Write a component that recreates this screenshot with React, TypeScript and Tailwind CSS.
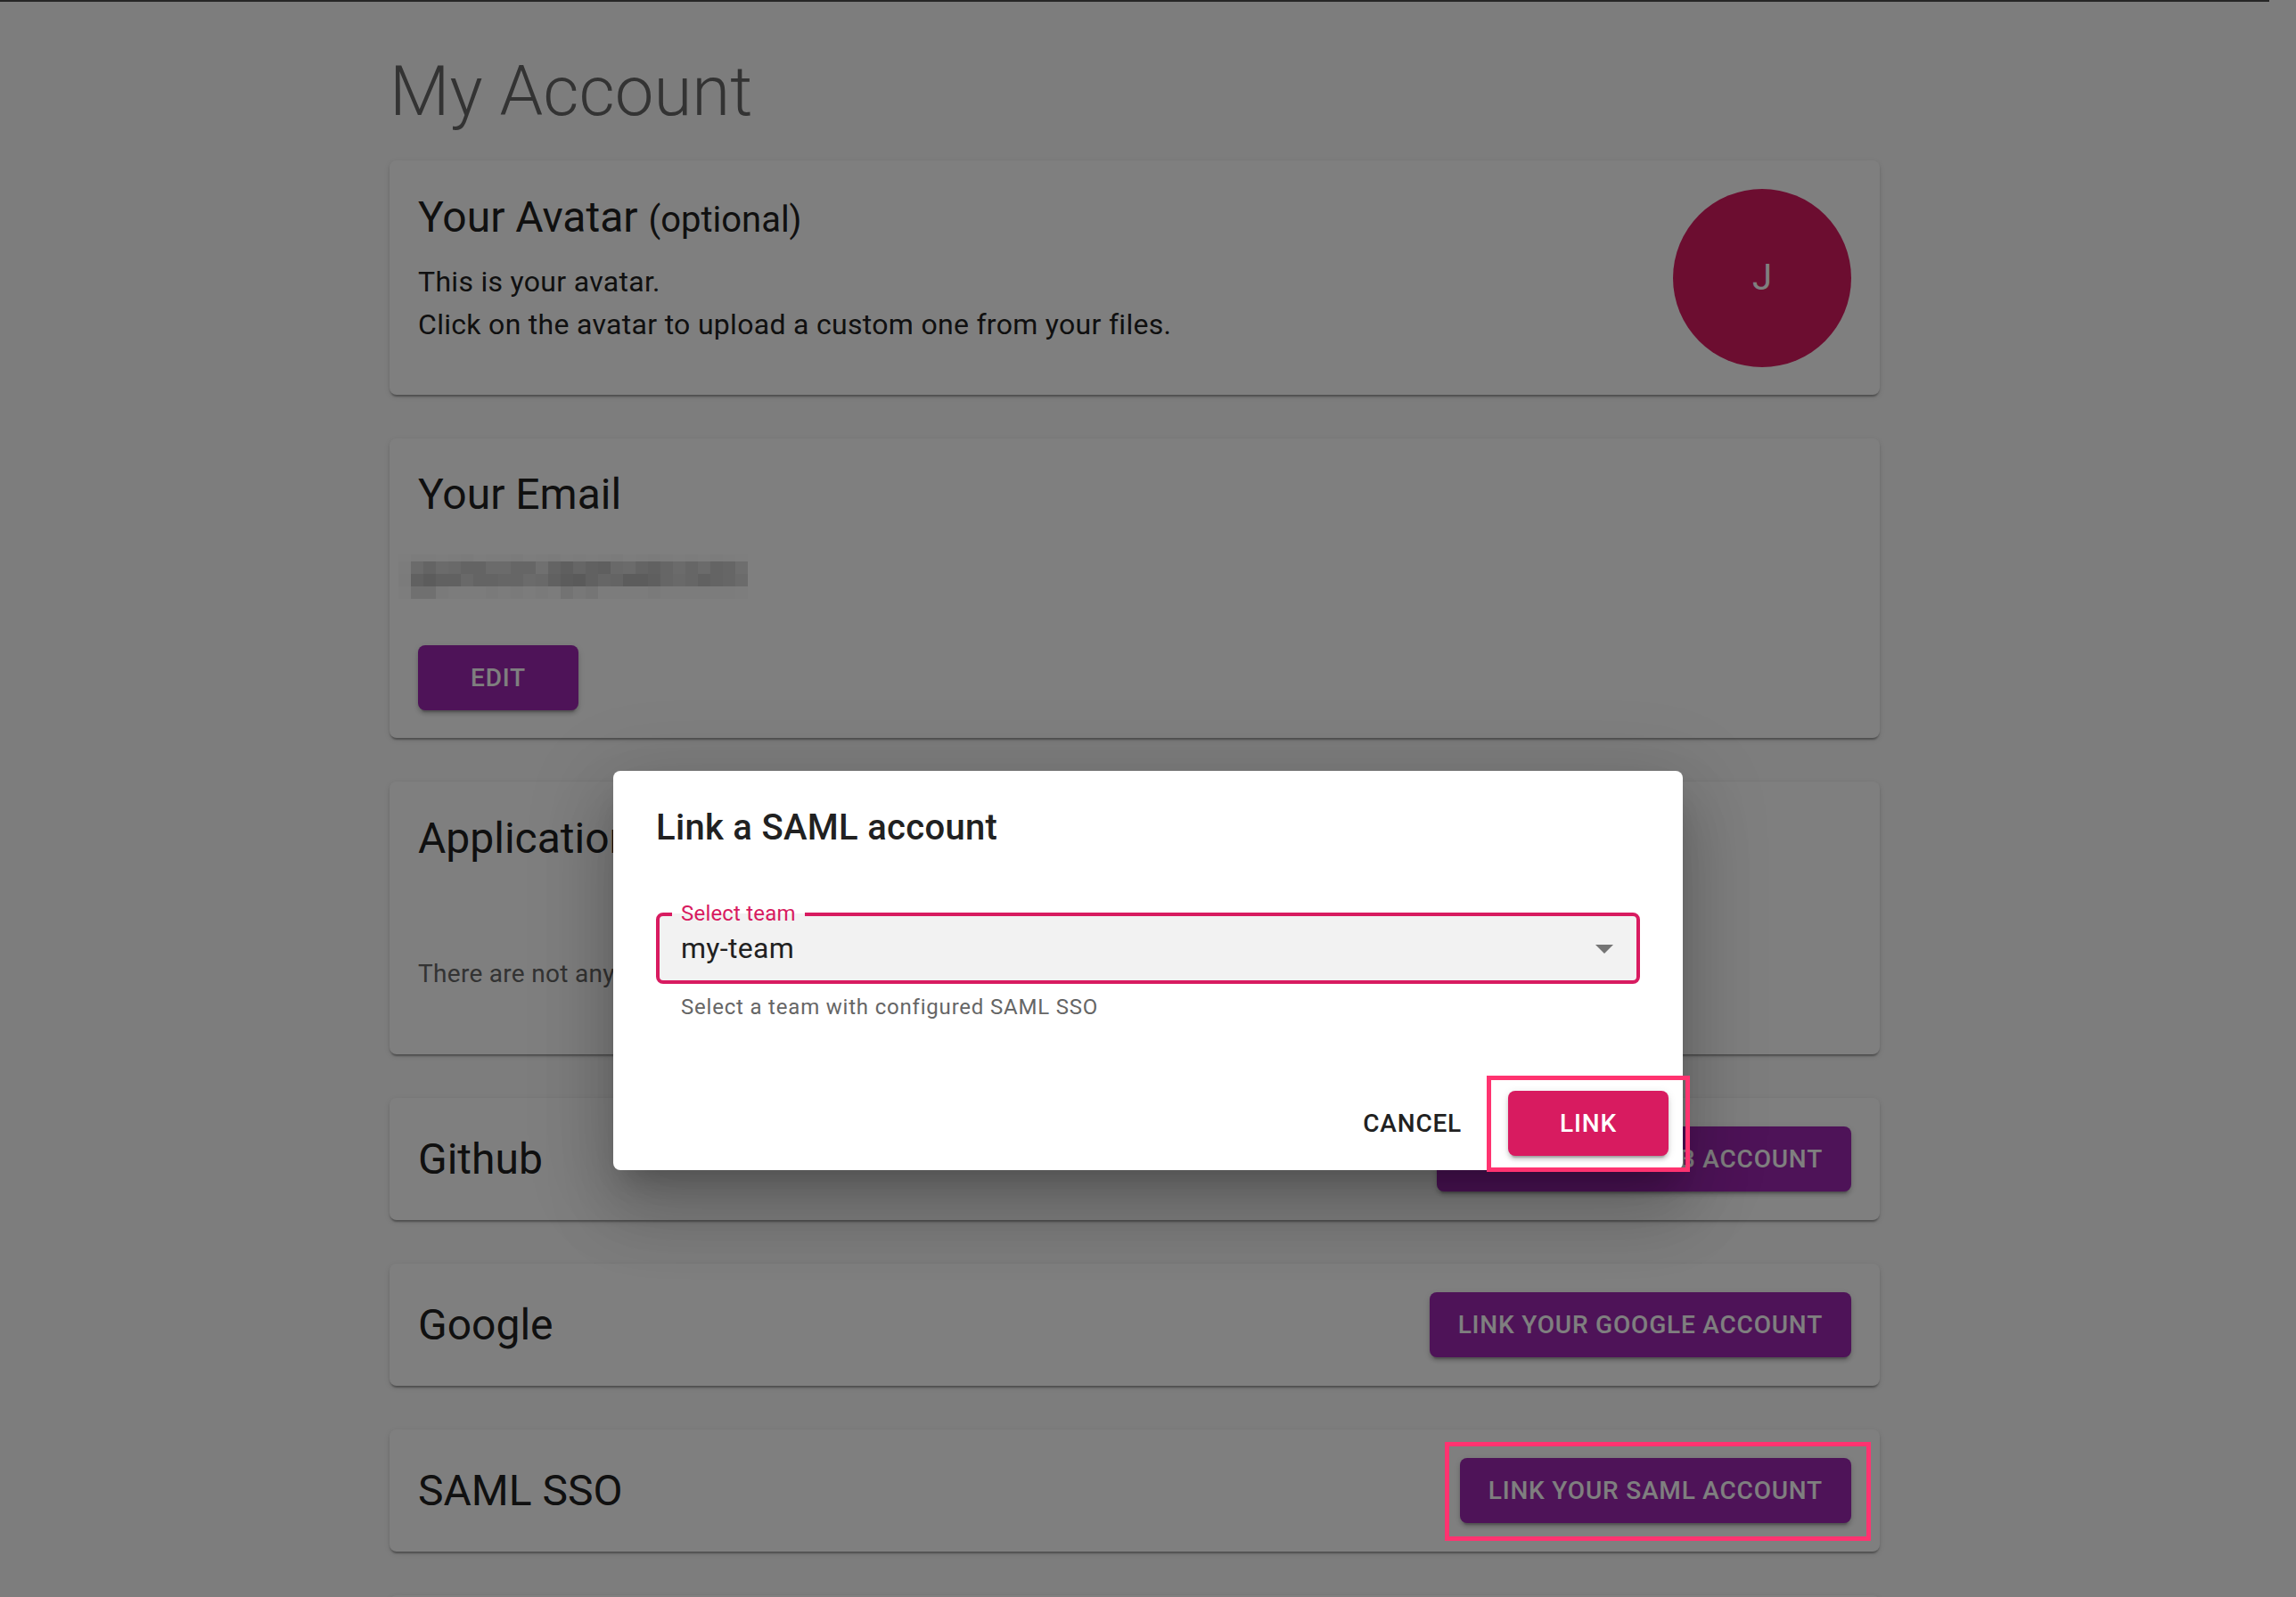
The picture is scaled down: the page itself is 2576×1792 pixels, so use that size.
import React from 'react'

const cardShadow =
  'shadow-[0_4px_2px_-2px_rgba(0,0,0,0.2),0_2px_2px_0_rgba(0,0,0,0.14),0_2px_6px_0_rgba(0,0,0,0.12)]'
const buttonShadow =
  'shadow-[0_6px_2px_-4px_rgba(0,0,0,0.2),0_4px_4px_0_rgba(0,0,0,0.14),0_2px_10px_0_rgba(0,0,0,0.12)]'

// pixelated (blurred) email address, grey levels before the backdrop darkens them
const MOSAIC = [
  [252, 248, 248, 250, 248, 246, 250, 248, 248, 246, 250, 248, 246, 250, 248, 250, 248, 246, 250, 248, 246, 248, 250, 248, 250, 248, 250, 252],
  [248, 215, 200, 215, 210, 200, 200, 215, 215, 205, 205, 225, 200, 190, 205, 195, 190, 210, 215, 200, 195, 205, 215, 205, 215, 200, 205, 220],
  [246, 195, 185, 195, 195, 210, 200, 200, 205, 205, 215, 210, 195, 185, 180, 195, 205, 200, 185, 185, 190, 205, 210, 205, 195, 200, 205, 215],
  [250, 225, 225, 245, 248, 248, 248, 245, 248, 245, 248, 245, 248, 230, 240, 235, 248, 248, 248, 248, 245, 248, 248, 248, 248, 248, 248, 250],
]
const ROW_HEIGHTS = ['h-[8px]', 'h-[14px]', 'h-[14px]', 'h-[14px]']

function Card({ className, children }: { className?: string; children: React.ReactNode }) {
  return <div className={`rounded-[8px] bg-white ${cardShadow} ${className ?? ''}`}>{children}</div>
}

function PurpleButton({ label }: { label: string }) {
  return (
    <button
      className={`h-[73px] px-[32px] rounded-[8px] bg-[#9c27b0] text-white text-[28px] font-medium tracking-[0.8px] uppercase whitespace-nowrap ${buttonShadow}`}
    >
      {label}
    </button>
  )
}

function LinkRow({ title, button }: { title: string; button: string }) {
  return (
    <Card className="flex items-center justify-between p-[32px]">
      <h2 className="text-[48px] leading-[64px] text-[#212121]">{title}</h2>
      <PurpleButton label={button} />
    </Card>
  )
}

export default function App() {
  return (
    <div className="relative w-[2576px] h-[1792px] overflow-hidden bg-[#fafafa] font-['Roboto','Liberation_Sans',sans-serif]">
      <div className="h-[2px] w-[2546px] bg-[#4c4c4c]" />

      <main className="w-[2546px]">
        <div className="mx-auto w-[1672px] pt-[54px]">
          <h1 className="text-[78px] leading-[93px] font-light text-[#666666] mb-[31px]">My Account</h1>

          <div className="flex flex-col gap-[49px]">
            {/* Avatar */}
            <Card className="flex items-start justify-between pt-[32px] pb-[31px] px-[32px]">
              <div>
                <h2 className="text-[48px] leading-[64px] text-[#212121] mb-[16px]">
                  Your Avatar <span className="text-[40px] leading-none">(optional)</span>
                </h2>
                <p className="text-[32px] leading-[48px] tracking-[0.3px] text-[#212121]">This is your avatar.</p>
                <p className="text-[32px] leading-[48px] tracking-[0.3px] text-[#212121]">
                  Click on the avatar to upload a custom one from your files.
                </p>
              </div>
              <div className="w-[200px] h-[200px] rounded-full bg-[#d81b60] flex items-center justify-center text-white text-[40px]">
                J
              </div>
            </Card>

            {/* Email */}
            <Card className="pt-[31px] pb-[31px] px-[32px]">
              <h2 className="text-[48px] leading-[64px] text-[#212121]">Your Email</h2>
              <div className="ml-[-22px] mt-[35px] flex flex-col w-[392px]">
                {MOSAIC.map((row, r) => (
                  <div key={r} className={`flex ${ROW_HEIGHTS[r]}`}>
                    {row.map((v, c) => (
                      <div key={c} className="w-[14px] h-full" style={{ background: `rgb(${v},${v},${v})` }} />
                    ))}
                  </div>
                ))}
              </div>
              <div className="mt-[52px]">
                <button
                  className={`h-[73px] w-[180px] rounded-[8px] bg-[#9c27b0] text-white text-[28px] font-medium tracking-[0.8px] ${buttonShadow}`}
                >
                  EDIT
                </button>
              </div>
            </Card>

            {/* Applications */}
            <Card className="pt-[32px] pb-[70px] px-[32px]">
              <h2 className="text-[48px] leading-[64px] text-[#212121]">Applications</h2>
              <p className="mt-[100px] text-[28px] leading-[40px] tracking-[0.3px] text-[#666666]">
                There are not any applications linked to your account.
              </p>
            </Card>

            <LinkRow title="Github" button="Link your Github account" />
            <LinkRow title="Google" button="Link your Google account" />
            <LinkRow title="SAML SSO" button="Link your SAML account" />

            <Card className="p-[32px]">
              <h2 className="text-[48px] leading-[64px] text-[#212121]">Delete Account</h2>
            </Card>
          </div>
        </div>
      </main>

      {/* backdrop */}
      <div className="absolute inset-0 bg-black/50" />

      {/* dialog */}
      <div className="absolute left-[688px] top-[865px] w-[1200px] rounded-[8px] bg-white shadow-[0_22px_30px_-14px_rgba(0,0,0,0.2),0_48px_76px_6px_rgba(0,0,0,0.14),0_18px_92px_16px_rgba(0,0,0,0.12)]">
        <h2 className="pt-[32px] px-[48px] text-[40px] leading-[64px] font-medium tracking-[0.3px] text-[#212121]">
          Link a SAML account
        </h2>
        <div className="px-[48px] pt-[63px] pb-[58px]">
          <div className="relative h-[80px] rounded-[8px] border-4 border-[#d81b60] bg-[#f2f2f2] flex items-center justify-between pl-[24px] pr-[12px]">
            <span className="absolute left-[14px] top-[-15px] px-[10px] text-[24px] leading-[24px] tracking-[0.2px] text-[#d81b60] bg-[linear-gradient(to_bottom,#ffffff_12px,#f2f2f2_12px)]">
              Select team
            </span>
            <span className="text-[32px] leading-[48px] tracking-[0.3px] text-[#212121]">my-team</span>
            <svg viewBox="0 0 24 24" className="w-[48px] h-[48px] fill-[#757575]">
              <path d="M7 10l5 5 5-5z" />
            </svg>
          </div>
          <p className="mt-[6px] pl-[28px] text-[24px] leading-[40px] tracking-[0.8px] text-[#666666]">
            Select a team with configured SAML SSO
          </p>
        </div>
        <div className="flex items-center justify-end gap-[36px] p-[16px]">
          <button className="h-[73px] px-[16px] text-[28px] font-medium tracking-[0.8px] text-[#212121]">CANCEL</button>
          <button
            className={`h-[73px] w-[180px] rounded-[8px] bg-[#d81b60] text-white text-[28px] font-medium tracking-[0.8px] ${buttonShadow}`}
          >
            LINK
          </button>
        </div>
      </div>

      {/* annotation highlights */}
      <div className="absolute left-[1668px] top-[1207px] w-[228px] h-[108px] border-[5px] border-[#ff3370]" />
      <div className="absolute left-[1621px] top-[1618px] w-[478px] h-[111px] border-[5px] border-[#ff3370]" />
    </div>
  )
}
